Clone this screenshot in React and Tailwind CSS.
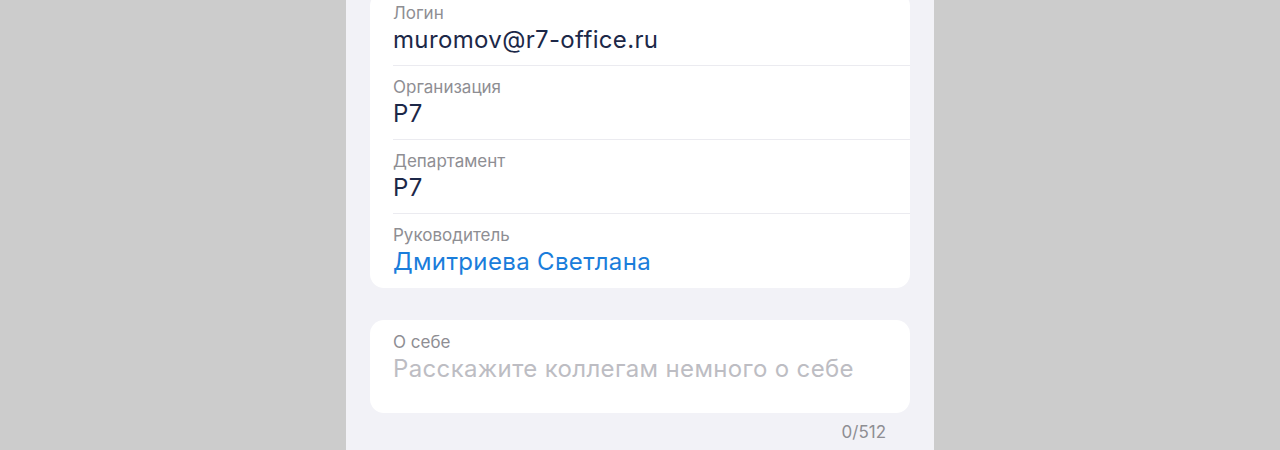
import React from "react";

const rows = [
  { label: "Логин", value: "muromov@r7-office.ru" },
  { label: "Организация", value: "Р7" },
  { label: "Департамент", value: "Р7" },
  { label: "Руководитель", value: "Дмитриева Светлана", link: true },
];

export default function App() {
  return (
    <div
      className="min-h-screen h-[450px] overflow-hidden bg-[#cccccc] flex justify-center"
      style={{ fontFamily: "Inter, 'Noto Sans', sans-serif" }}
    >
      <div className="w-[588px] bg-[#f2f2f7] px-6 flex flex-col">
        {/* Profile fields */}
        <div className="bg-white rounded-[14px] -mt-[8px] pl-[23px]">
          {rows.map((row, i) => (
            <div
              key={row.label}
              className={`pt-[11px] ${
                i < rows.length - 1
                  ? "pb-[10px] border-b border-[#ebebf0]"
                  : "pb-[11px]"
              }`}
            >
              <p className="text-[17px] leading-5 text-[#8e8e93]">
                {row.label}
              </p>
              <p
                className={`mt-[2px] text-[24px] leading-[30px] tracking-[0.35px] ${
                  row.link ? "text-[#1a7ddb]" : "text-[#1c2848]"
                }`}
              >
                {row.value}
              </p>
            </div>
          ))}
        </div>

        {/* About */}
        <div className="mt-[32px] bg-white rounded-[14px] pl-[23px] pt-[12px] h-[93px]">
          <p className="text-[17px] leading-5 text-[#8e8e93]">О себе</p>
          <p className="mt-[2px] text-[24px] leading-[30px] tracking-[0.35px] text-[#bdbdc3]">
            Расскажите коллегам немного о себе
          </p>
        </div>
        <p className="text-right pr-6 mt-[9px] text-[17px] leading-5 text-[#8e8e93]">
          0/512
        </p>
      </div>
    </div>
  );
}
